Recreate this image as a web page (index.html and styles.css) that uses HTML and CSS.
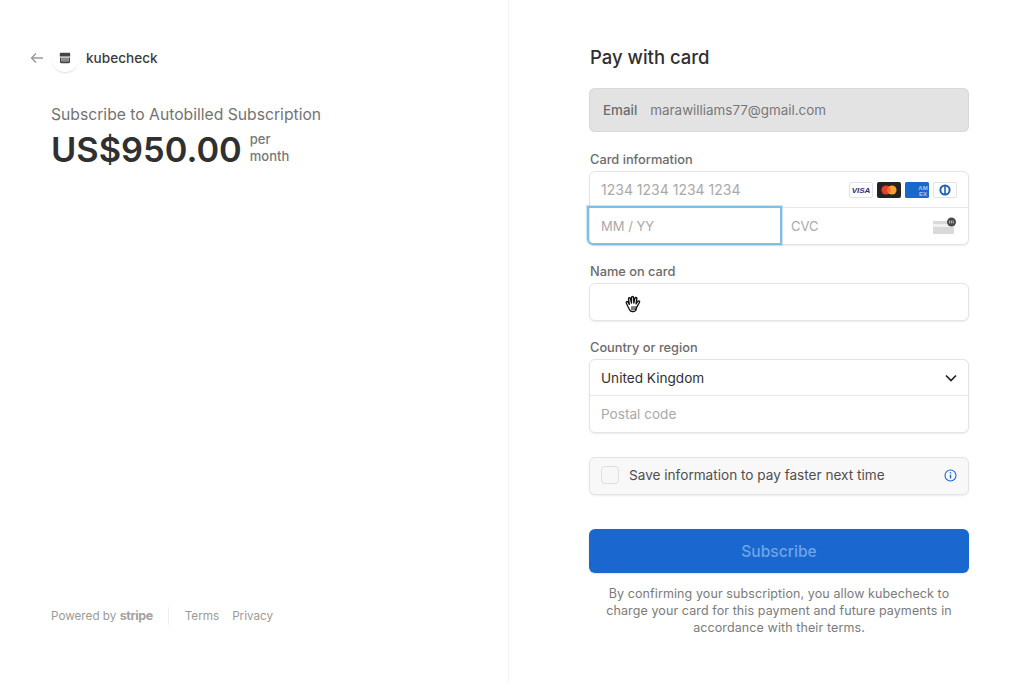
FILE: index.html
```html
<!DOCTYPE html>
<html lang="en">
<head>
<meta charset="utf-8">
<title>Subscribe to Autobilled Subscription</title>
<link rel="stylesheet" href="styles.css">
</head>
<body>
<main class="page">
  <section class="summary">
    <div class="summary-top">
      <header class="merchant">
        <svg class="back" width="14" height="12" viewBox="0 0 14 12" fill="none" stroke="#9a9a9a" stroke-width="1.4"><path d="M13 6H1.500M6 1.500 1.500 6 6 10.500"/></svg>
        <span class="logo">
          <svg width="12" height="12" viewBox="0 0 12 12"><path fill="#444" d="M2 .8h8c.7 0 1.200.5 1.200 1.200v2.500H.8V2C.8 1.300 1.300.8 2 .8zM1 5.500h1.300v3.700h7.400V5.500H11V10c0 .7-.5 1.200-1.200 1.200H2.200C1.500 11.200 1 10.700 1 10z"/><path fill="#8a8a8a" d="M2.300 5.500h7.400v3.700H2.300z"/></svg>
        </span>
        <span class="merchant-name">kubecheck</span>
      </header>
      <p class="product">Subscribe to Autobilled Subscription</p>
      <div class="price-row">
        <span class="price">US$950.00</span>
        <span class="period">per<br>month</span>
      </div>
    </div>
    <footer class="legal">
      <span class="powered">Powered by <b class="stripe">stripe</b></span>
      <span class="links"><span>Terms</span><span>Privacy</span></span>
    </footer>
  </section>

  <section class="checkout">
    <h1 class="title">Pay with card</h1>
    <div class="email"><span class="email-label">Email</span><span class="email-value">marawilliams77@gmail.com</span></div>

    <div class="label label-card">Card information</div>
    <div class="box card-box">
      <div class="row">
        <span class="ph number">1234 1234 1234 1234</span>
        <span class="brands">
          <svg width="24" height="16" viewBox="0 0 24 16"><rect x=".5" y=".5" width="23" height="15" rx="1.500" fill="#fff" stroke="#e3e3e3"/><text x="12" y="11" text-anchor="middle" class="visa">VISA</text></svg>
          <svg width="24" height="16" viewBox="0 0 24 16"><rect width="24" height="16" rx="2" fill="#222"/><circle cx="9" cy="8" r="4.600" fill="#e8402a"/><circle cx="15" cy="8" r="4.600" fill="#f5a02c"/><path d="M12 4.400a4.600 4.600 0 0 1 0 7.200 4.600 4.600 0 0 1 0-7.200z" fill="#f0702a"/></svg>
          <svg width="24" height="16" viewBox="0 0 24 16"><rect width="24" height="16" rx="1.500" fill="#1a68cc"/><text x="18" y="7.500" text-anchor="middle" class="amex">AM</text><text x="18" y="13.500" text-anchor="middle" class="amex">EX</text></svg>
          <svg width="24" height="16" viewBox="0 0 24 16"><rect x=".5" y=".5" width="23" height="15" rx="1.500" fill="#fff" stroke="#e3e3e3"/><circle cx="12" cy="8" r="5.600" fill="#1f63b4"/><circle cx="12" cy="8" r="3.600" fill="#fff"/><rect x="11.200" y="3.400" width="1.600" height="9.200" fill="#1f63b4"/></svg>
        </span>
      </div>
      <div class="row split">
        <div class="cell expiry"><span class="ph small">MM / YY</span></div>
        <div class="cell cvc">
          <span class="ph small">CVC</span>
          <svg width="24" height="18" viewBox="0 0 24 18"><rect x="1" y="4" width="21" height="13" rx="1" fill="#d9d9d9"/><rect x="1" y="7" width="21" height="3" fill="#f1f1f1"/><circle cx="19.500" cy="5" r="4.500" fill="#4a4a4a"/><path d="M17.600 3.600v2.800M19.400 3.600v2.800M21.200 3.600v2.800" stroke="#ddd" stroke-width=".8"/></svg>
        </div>
      </div>
      <div class="focus"></div>
    </div>

    <div class="label">Name on card</div>
    <div class="box name-box">
      <svg class="hand" width="20" height="21" viewBox="0 0 18 19" fill="#fff" stroke="#111" stroke-width="1.200" stroke-linejoin="round" stroke-linecap="round"><path d="M3.600 10.600 2 7.200c-.5-1.200 1-1.800 1.600-.8l1.200 2L4 3.600c-.2-1.300 1.500-1.600 1.800-.3l.9 4 .1-5c0-1.300 1.800-1.300 1.800 0l.2 5 1-4.300c.3-1.200 2-.9 1.800.3l-.8 4.700 1.600-2.200c.8-1 2.200-.1 1.500 1l-2.400 4.200-.8 2.500c-.3 1-1 1.500-2 1.500H7.300c-1 0-1.800-.5-2.200-1.400z"/><path d="M7.200 10.500v3M9 10.500v3M10.800 10.500v3" fill="none" stroke-width="1"/></svg>
    </div>

    <div class="label">Country or region</div>
    <div class="box address-box">
      <div class="row">
        <span class="country">United Kingdom</span>
        <svg width="12" height="8" viewBox="0 0 12 8" fill="none" stroke="#222" stroke-width="1.700"><path d="M1 1.500 6 6.500l5-5"/></svg>
      </div>
      <div class="row"><span class="ph">Postal code</span></div>
    </div>

    <div class="box save-box">
      <span class="check"></span>
      <span class="save-text">Save information to pay faster next time</span>
      <svg width="13" height="13" viewBox="0 0 13 13" fill="none" stroke="#1a68cc"><circle cx="6.500" cy="6.500" r="5.500" stroke-width="1.100"/><path d="M6.500 5.700v3.800" stroke-width="1.400"/><path d="M6.500 3.200v1.300" stroke-width="1.400"/></svg>
    </div>

    <button class="subscribe" type="button">Subscribe</button>
    <p class="terms">By confirming your subscription, you allow kubecheck to charge your card for this payment and future payments in accordance with their terms.</p>
  </section>
</main>
</body>
</html>
```
FILE: styles.css
```css
* { box-sizing: border-box; }
html, body { margin: 0; height: 100%; }
body {
  background: #fff;
  font-family: Inter, "Liberation Sans", sans-serif;
  color: #303030;
  overflow: hidden;
}
.page {
  display: grid;
  grid-template-columns: 509px 515px;
  height: 683px;
}
.summary {
  display: flex;
  flex-direction: column;
  justify-content: space-between;
  padding: 44px 0 58px 30px;
  border-right: 1px solid #f5f5f5;
}
.merchant { display: flex; align-items: center; height: 28px; }
.back { margin-right: 7px; }
.logo {
  width: 28px;
  height: 28px;
  border-radius: 50%;
  display: flex;
  align-items: center;
  justify-content: center;
  box-shadow: 0 2px 2px -1px rgba(0,0,0,.14);
}
.merchant-name { margin-left: 7px; font-size: 13.600px; line-height: 26px; font-weight: 500; color: #3c3c3c; }
.product { margin: 31px 0 0 21px; font-size: 15.700px; line-height: 24px; font-weight: 400; color: #737373; }
.price-row { display: flex; align-items: center; margin: 1px 0 0 21px; }
.price { font-size: 34.400px; line-height: 44px; font-weight: 600; letter-spacing: 0; color: #303030; }
.period { margin-left: 8px; margin-top: -4px; font-size: 13px; line-height: 17px; font-weight: 500; color: #777; }
.legal { display: flex; align-items: center; margin-left: 21px; font-size: 11.700px; color: #9a9a9a; height: 18px; }
.powered { padding-right: 15px; border-right: 1px solid #eee; line-height: 18px; }
.stripe { font-weight: 700; font-size: 12.500px; letter-spacing: -.4px; color: #a3a3a3; }
.links { display: flex; gap: 13px; margin-left: 16px; }

.checkout { padding: 43px 55px 0 80px; }
.title { margin: 0; padding-left: 1px; font-size: 18.500px; line-height: 28px; font-weight: 500; color: #303030; }
.email {
  display: flex;
  align-items: center;
  height: 44px;
  margin-top: 17px;
  padding-left: 14px;
  background: #e3e3e3;
  border-radius: 6px;
  box-shadow: inset 0 0 0 1px #d9d9d9;
  font-size: 13.400px;
}
.email-label { font-weight: 500; color: #6d6d6d; margin-right: 13px; }
.email-value { color: #787878; }
.label { margin-top: 19px; padding-left: 1px; height: 16px; font-size: 12.800px; line-height: 16px; font-weight: 500; color: #6b6b6b; }
.label-card { margin-top: 20px; }
.box {
  position: relative;
  margin-top: 3px;
  border: 1px solid #e4e4e4;
  border-radius: 6px;
  background: #fff;
  box-shadow: 0 1px 2px rgba(0,0,0,.08);
}
.row {
  display: flex;
  align-items: center;
  justify-content: space-between;
  height: 35px;
  padding: 0 11px;
  font-size: 13.600px;
}
.row + .row { border-top: 1px solid #e8e8e8; height: 37px; }
.row.split { padding: 0; }
.ph { color: #a9a9a9; }
.ph.number { font-size: 14px; }
.ph.small { font-size: 13px; }
.brands { display: flex; width: 108px; justify-content: space-between; }
.cell { display: flex; align-items: center; height: 100%; padding-left: 11px; }
.expiry { flex: 0 0 190px; }
.cvc { flex: 1; justify-content: space-between; padding-right: 12px; }
.visa { font: italic 700 8px "Liberation Sans", sans-serif; fill: #26337a; }
.amex { font: 700 6px "Liberation Sans", sans-serif; fill: #a9c9ef; }
.focus {
  position: absolute;
  left: -3px;
  top: 34px;
  width: 195px;
  height: 39px;
  border: 2px solid #7fbfe4;
  border-radius: 0 0 0 6px;
  box-shadow: 0 0 0 1px rgba(127,191,228,.4);
}
.name-box { height: 38px; }
.hand { position: absolute; left: 34px; top: 11px; }
.country { color: #303030; }
.save-box {
  display: flex;
  align-items: center;
  height: 38px;
  margin-top: 24px;
  padding: 0 11px 2px 11px;
  background: #f8f8f8;
  font-size: 13.600px;
}
.check {
  width: 18px;
  height: 18px;
  border-radius: 4px;
  background: #f7f7f7;
  border: 1px solid #dedede;
}
.save-text { flex: 1; margin-left: 10px; color: #4f4f4f; }
.subscribe {
  display: block;
  width: 380px;
  height: 44px;
  margin-top: 34px;
  padding: 0;
  border: 0;
  border-radius: 6px;
  background: #1a68cf;
  box-shadow: 0 1px 2px rgba(0,0,0,.12);
  color: #6ea4e6;
  font: 500 15.600px Inter, "Liberation Sans", sans-serif;
}
.terms {
  margin: 12px 0 0;
  padding: 0 12px;
  font-size: 12.500px;
  line-height: 17px;
  letter-spacing: .1px;
  text-align: center;
  color: #7b7b7b;
}
```
